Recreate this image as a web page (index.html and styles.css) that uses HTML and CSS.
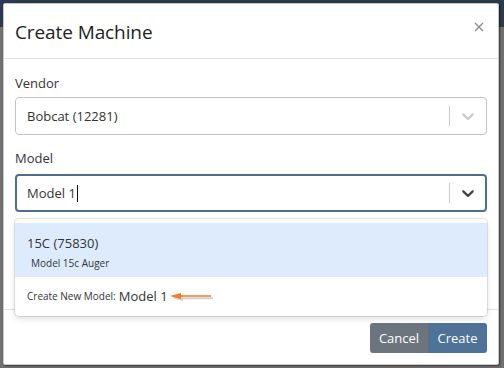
FILE: index.html
```
<!DOCTYPE html>
<html lang="en">
<head>
    <meta charset="UTF-8">
    <title>Create Machine</title>
    <link rel="stylesheet" href="styles.css">
</head>
<body>
    <div class="modal">
        <div class="modal-header">
            <h2 class="modal-title">Create Machine</h2>
            <svg class="close" width="10" height="10" viewBox="0 0 10 10">
                <path d="M1 1 L9 9 M9 1 L1 9" stroke="#8a8a8a" stroke-width="1.4" fill="none"/>
            </svg>
        </div>

        <div class="modal-body">
            <label class="field-label">Vendor</label>
            <div class="select">
                <div class="select-value">Bobcat (12281)</div>
                <span class="separator"></span>
                <svg class="chevron" width="20" height="20" viewBox="0 0 20 20">
                    <path fill="#cccccc" d="M4.516 7.548c0.436-0.446 1.043-0.481 1.576 0l3.908 3.747 3.908-3.747c0.533-0.481 1.141-0.446 1.574 0 0.436 0.445 0.408 1.197 0 1.615-0.406 0.418-4.695 4.502-4.695 4.502-0.217 0.223-0.502 0.335-0.787 0.335s-0.57-0.112-0.789-0.335c0 0-4.287-4.084-4.695-4.502s-0.436-1.17 0-1.615z"/>
                </svg>
            </div>

            <label class="field-label model-label">Model</label>
            <div class="select-wrap">
                <div class="select focused">
                    <div class="select-value">Model 1<span class="caret"></span></div>
                    <span class="separator"></span>
                    <svg class="chevron" width="20" height="20" viewBox="0 0 20 20">
                        <path fill="#444444" d="M4.516 7.548c0.436-0.446 1.043-0.481 1.576 0l3.908 3.747 3.908-3.747c0.533-0.481 1.141-0.446 1.574 0 0.436 0.445 0.408 1.197 0 1.615-0.406 0.418-4.695 4.502-4.695 4.502-0.217 0.223-0.502 0.335-0.787 0.335s-0.57-0.112-0.789-0.335c0 0-4.287-4.084-4.695-4.502s-0.436-1.17 0-1.615z"/>
                    </svg>
                </div>

                <!-- dropdown menu -->
                <div class="menu">
                    <div class="option active">
                        <div class="option-title">15C (75830)</div>
                        <div class="option-sub">Model 15c Auger</div>
                    </div>
                    <div class="option create-option">
                        <span class="create-label">Create New Model:</span>
                        <span class="create-value">Model 1</span>
                        <svg class="arrow" width="46" height="12" viewBox="0 0 46 12">
                            <path d="M3 7 L14 4 L14 6.2 L44 6.2 L44 8.2 L14 8.2 L14 10 Z" fill="#999" opacity="0.45"/>
                            <path d="M1 5 L12 2 L12 4.2 L42 4.2 L42 5.8 L12 5.8 L12 8 Z" fill="#f47b20"/>
                        </svg>
                    </div>
                </div>
            </div>
        </div>

        <div class="modal-footer">
            <div class="btn-group">
                <button class="btn btn-cancel">Cancel</button>
                <button class="btn btn-create">Create</button>
            </div>
        </div>
    </div>
</body>
</html>
```

FILE: styles.css
```
/* Page backdrop */
body {
    margin: 0;
    height: 368px;
    overflow: hidden;
    font-family: "Open Sans", "Noto Sans", sans-serif;
    color: #333;
    background: linear-gradient(to bottom, #293b4d 0, #293b4d 27px, #707070 27px);
}

.modal {
    box-sizing: border-box;
    width: 496px;
    height: 362px;
    margin: 3px 0 0 3px;
    background: #fff;
    border: 1px solid #c8c8c8;
    border-radius: 2px;
    box-shadow: 1px 1px 2px rgba(0, 0, 0, 0.5);
    display: flex;
    flex-direction: column;
}

/* Header */
.modal-header {
    height: 54px;
    padding: 0 14px 0 11px;
    border-bottom: 1px solid #dee2e6;
    display: flex;
    align-items: center;
    justify-content: space-between;
}

.modal-title {
    margin: 2px 0 0 0;
    font-size: 19px;
    font-weight: 400;
    color: #222;
    letter-spacing: -0.1px;
}

.close {
    margin-top: -8px;
}

/* Body */
.modal-body {
    padding: 14px 11px 0 11px;
}

.field-label {
    display: block;
    font-size: 13px;
    line-height: 21px;
    color: #333;
    margin-bottom: 3px;
}

.model-label {
    margin-top: 13px;
    margin-bottom: 5px;
}

.select {
    box-sizing: border-box;
    height: 38px;
    border: 1px solid #c4c4c4;
    border-radius: 4px;
    display: flex;
    align-items: center;
    background: #fff;
}

.select.focused {
    border: 2px solid #4f6d8f;
}

.select-value {
    flex: 1;
    padding-left: 11px;
    font-size: 13px;
    color: #333;
}

.focused .select-value {
    padding-left: 10px;
}

.caret {
    display: inline-block;
    width: 1px;
    height: 17px;
    background: #111;
    vertical-align: -4px;
    margin-left: 1px;
}

.separator {
    width: 1px;
    height: 20px;
    background: #cccccc;
}

.chevron {
    margin: 0 8px;
}

.focused .chevron {
    margin-right: 7px;
}

/* Dropdown menu */
.select-wrap {
    position: relative;
}

.menu {
    position: absolute;
    left: 0;
    right: 0;
    top: 45px;
    padding: 4px 0;
    background: #fff;
    border-radius: 4px;
    box-shadow: 0 0 0 1px rgba(0, 0, 0, 0.1), 0 3px 6px rgba(0, 0, 0, 0.12);
    z-index: 2;
}

.option {
    padding: 0 12px;
}

.option.active {
    background: #deebfc;
    height: 54px;
    padding-top: 10px;
    box-sizing: border-box;
}

.option-title {
    font-size: 13px;
    line-height: 20px;
    color: #333;
}

.option-sub {
    font-size: 10px;
    line-height: 20px;
    margin-left: 4px;
    color: #333;
}

.create-option {
    box-sizing: border-box;
    height: 35px;
    padding-top: 3px;
    display: flex;
    align-items: center;
}

.create-label {
    font-size: 10px;
    color: #333;
    margin-right: 3px;
}

.create-value {
    font-size: 13px;
    color: #333;
}

.arrow {
    margin-left: 1px;
    margin-top: 1px;
}

/* Footer */
.modal-footer {
    margin-top: auto;
    border-top: 1px solid #dee2e6;
    padding: 13px 11px 11px 0;
    display: flex;
    justify-content: flex-end;
}

.btn-group {
    display: flex;
}

.btn {
    height: 30px;
    border: none;
    color: #fff;
    font-family: "Open Sans", "Noto Sans", sans-serif;
    font-size: 13px;
    padding: 0;
}

.btn-cancel {
    width: 58px;
    background: #6c757d;
    border-radius: 3px 0 0 3px;
}

.btn-create {
    width: 59px;
    background: #4f7297;
    border-radius: 0 3px 3px 0;
}
```
